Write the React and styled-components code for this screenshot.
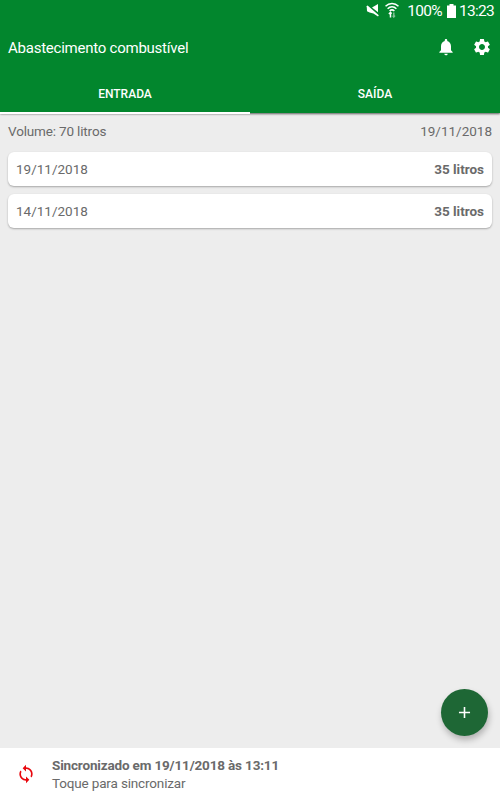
import styled, { createGlobalStyle } from 'styled-components';
import { MdAdd, MdNotifications, MdSettings, MdSync } from 'react-icons/md';

const entries = [
  { date: '19/11/2018', volume: '35 litros' },
  { date: '14/11/2018', volume: '35 litros' },
];

const MuteIcon = () => (
  <svg width="14" height="14" viewBox="0 0 14 14" fill="#fff">
    <path d="M0.4 3.2L1.6 2.4L12.8 12.2L12 13.4L7.4 10.4L3.6 9.4L1 8.2L0.8 4.6Z" />
    <path d="M12 1V9.2L6 4.6Z" />
  </svg>
);

const WifiIcon = () => (
  <svg width="14" height="16" viewBox="0 0 14 16" fill="none" stroke="#fff" strokeWidth="1.5">
    <path d="M0.5 4.3C4.2 0.6 9.8 0.6 13.5 4.3" />
    <path d="M2.6 6.7C5.2 4.2 8.8 4.2 11.4 6.7" />
    <path d="M4.6 9C6 7.7 8 7.7 9.4 9" />
    <path d="M5.5 15.4V10.6M3.9 12L5.5 10.4L6.6 11.7" />
    <path d="M8.8 10.4V15M7.7 13.6L8.8 15L10 13.6" opacity="0.5" />
  </svg>
);

const BatteryIcon = () => (
  <svg width="9" height="14" viewBox="0 0 9 14" fill="#fff">
    <path d="M2.5 0h4v1.5H9V14H0V1.5h2.5z" />
  </svg>
);

const App = () => {
  return (
    <Screen>
      <GlobalStyle />
      <Header>
        <StatusBar>
          <MuteIcon />
          <WifiIcon />
          <Battery>
            <span>100%</span>
            <BatteryIcon />
          </Battery>
          <Clock>13:23</Clock>
        </StatusBar>
        <Toolbar>
          <Title>Abastecimento combustível</Title>
          <Actions>
            <IconButton aria-label="Notificações"><MdNotifications size={20} /></IconButton>
            <IconButton aria-label="Configurações"><MdSettings size={20} /></IconButton>
          </Actions>
        </Toolbar>
        <Tabs>
          <Tab $active>ENTRADA</Tab>
          <Tab>SAÍDA</Tab>
        </Tabs>
      </Header>
      <Content>
        <Summary>
          <SummaryText>Volume: 70 litros</SummaryText>
          <DateText>19/11/2018</DateText>
        </Summary>
        <List>
          {entries.map((entry) => (
            <Card key={entry.date}>
              <DateText>{entry.date}</DateText>
              <Amount>{entry.volume}</Amount>
            </Card>
          ))}
        </List>
        <AddButton aria-label="Adicionar"><MdAdd size={19} /></AddButton>
      </Content>
      <SyncBar>
        <MdSync size={20} color="#e8080e" />
        <SyncInfo>
          <SyncTitle>Sincronizado em 19/11/2018 às 13:11</SyncTitle>
          <SyncHint>Toque para sincronizar</SyncHint>
        </SyncInfo>
      </SyncBar>
    </Screen>
  );
};

export default App;

// Styled Components
const GlobalStyle = createGlobalStyle`
  * {
    box-sizing: border-box;
  }

  body {
    margin: 0;
    font-family: Roboto, sans-serif;
    color: #6a6a6a;
  }

  button {
    padding: 0;
    border: none;
    background: none;
    font-family: inherit;
    cursor: pointer;
  }

  svg {
    display: block;
    flex-shrink: 0;
  }
`;

const Screen = styled.div`
  display: flex;
  flex-direction: column;
  width: 500px;
  height: 800px;
  overflow: hidden;
  background: #ededed;
`;

const Header = styled.header`
  position: relative;
  height: 113px;
  background: #02862d;
  color: #fff;
  box-shadow: 0 1px 2px rgba(0, 0, 0, 0.6);
`;

const StatusBar = styled.div`
  display: flex;
  align-items: center;
  justify-content: flex-end;
  gap: 5px;
  height: 22px;
  padding: 0 6px 2px 0;
  font-size: 15.5px;
  letter-spacing: -0.7px;
`;

const Battery = styled.div`
  display: flex;
  align-items: center;
  gap: 5px;
  margin-left: 3px;
  padding-top: 2px;
`;

const Clock = styled.span`
  margin-left: -2px;
  padding-top: 2px;
`;

const Toolbar = styled.div`
  display: flex;
  align-items: center;
  justify-content: space-between;
  height: 52px;
  padding: 0 8px;
`;

const Title = styled.h1`
  margin: 0;
  font-size: 15px;
  font-weight: 400;
  letter-spacing: -0.24px;
`;

const Actions = styled.div`
  display: flex;
  gap: 16px;
  padding-bottom: 2px;
`;

const IconButton = styled.button`
  color: #fff;
`;

const Tabs = styled.nav`
  display: flex;
  height: 40px;
`;

const Tab = styled.button`
  flex: 1;
  padding-top: 2px;
  border-bottom: 2px solid ${({ $active }) => ($active ? '#fff' : 'transparent')};
  color: #fff;
  font-size: 12px;
  font-weight: 500;
`;

const Content = styled.main`
  flex: 1;
  position: relative;
  padding: 1px 8px 0;
`;

const Summary = styled.div`
  display: flex;
  align-items: center;
  justify-content: space-between;
  height: 38px;
  padding-bottom: 4px;
`;

const SummaryText = styled.span`
  font-size: 13.5px;
  letter-spacing: -0.16px;
`;

const DateText = styled.span`
  font-size: 13.5px;
`;

const List = styled.div`
  display: flex;
  flex-direction: column;
  gap: 8px;
`;

const Card = styled.div`
  display: flex;
  align-items: center;
  justify-content: space-between;
  height: 34px;
  padding: 0 8px;
  border-radius: 6px;
  background: #fff;
  box-shadow: 0 1px 2px rgba(0, 0, 0, 0.3);
`;

const Amount = styled.span`
  font-size: 13.5px;
  font-weight: 700;
`;

const AddButton = styled.button`
  position: absolute;
  right: 12px;
  bottom: 12px;
  display: flex;
  align-items: center;
  justify-content: center;
  width: 47px;
  height: 47px;
  border-radius: 50%;
  background: #1e6735;
  color: #fff;
  box-shadow: 1px 4px 6px rgba(0, 0, 0, 0.25);
`;

const SyncBar = styled.footer`
  display: flex;
  align-items: center;
  gap: 16px;
  height: 52px;
  padding: 0 16px;
  background: #fff;
`;

const SyncInfo = styled.div`
  display: flex;
  flex-direction: column;
  line-height: 18px;
`;

const SyncTitle = styled.span`
  font-size: 13.5px;
  font-weight: 700;
  letter-spacing: -0.16px;
`;

const SyncHint = styled.span`
  font-size: 13.5px;
  letter-spacing: -0.16px;
`;
